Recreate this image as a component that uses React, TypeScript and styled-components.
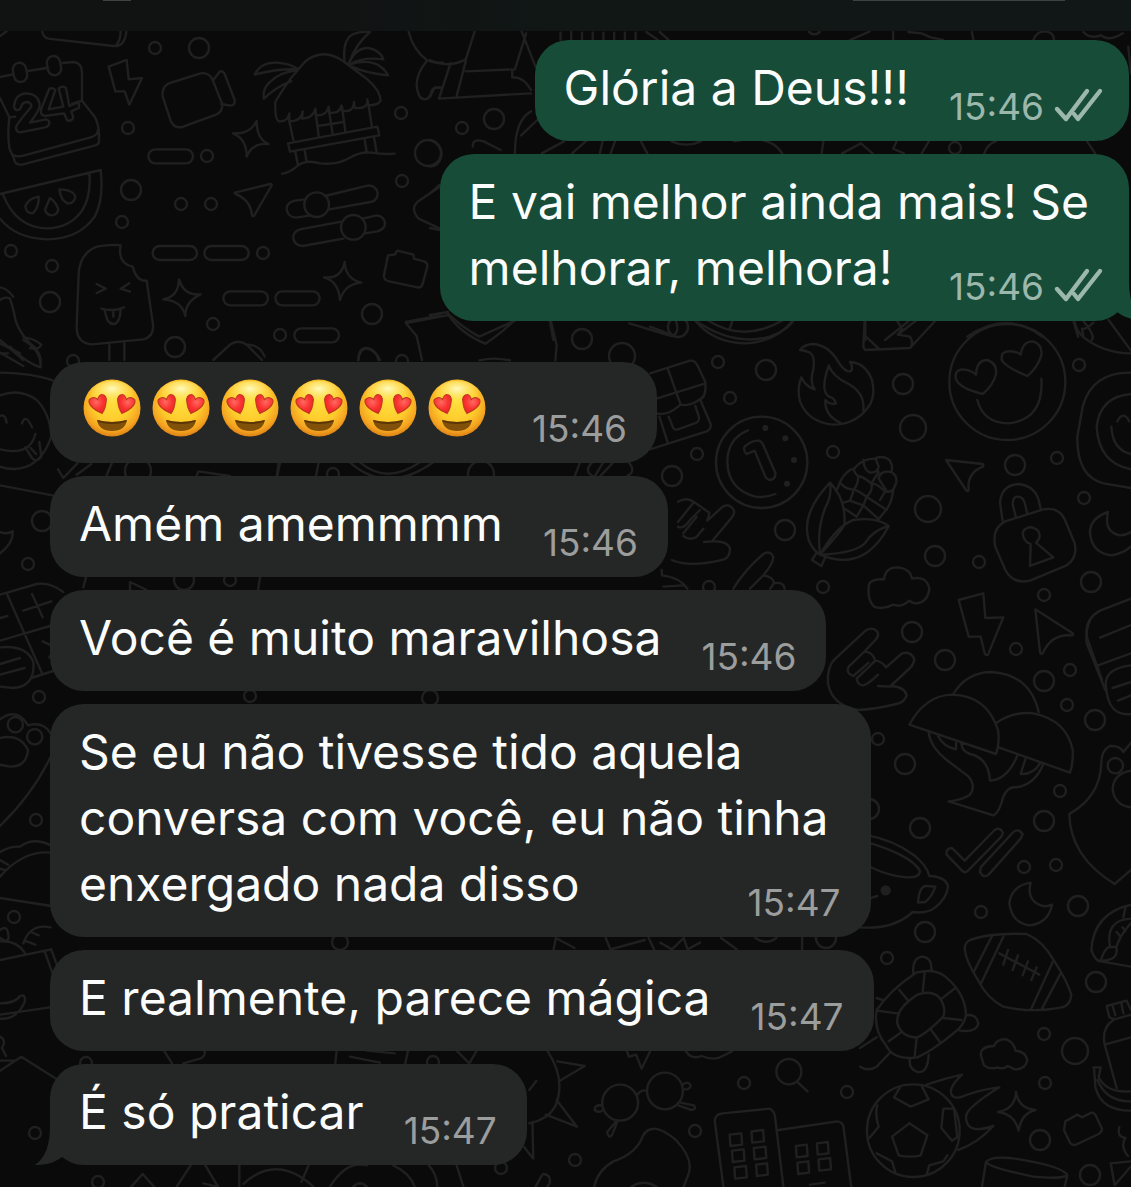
import React from "react";
import styled, { createGlobalStyle } from "styled-components";

const colors = {
  wallpaper: "#0a0a0a",
  doodle: "#202020",
  incoming: "#252726",
  outgoing: "#174c38",
  text: "#fbfcfc",
  incomingMeta: "#9c9d9d",
  outgoingMeta: "#9cb7ac",
};

const GlobalStyle = createGlobalStyle`
  *, *::before, *::after { box-sizing: border-box; }
  body {
    margin: 0;
    background: ${colors.wallpaper};
    font-family: Inter, "Liberation Sans", sans-serif;
  }
`;

const Screen = styled.main`
  position: relative;
  min-height: 100vh;
  overflow: hidden;
  background: ${colors.wallpaper};
`;

const WallpaperArt = styled.svg`
  position: absolute;
  top: 0;
  left: 0;
  width: 100%;
  height: 100%;
  fill: none;
  stroke: ${colors.doodle};
  stroke-width: 2.4;
  stroke-linecap: round;
  stroke-linejoin: round;

  path, circle, rect, ellipse {
    vector-effect: non-scaling-stroke;
  }
`;

const TopBar = styled.header`
  position: relative;
  display: flex;
  justify-content: space-between;
  height: 31px;
  padding: 0 66px 0 103px;
  background: linear-gradient(90deg, #111212 0%, #111313 30%, #101715 50%, #111716 100%);
`;

const TopBarEdge = styled.span<{ $width: number }>`
  width: ${({ $width }) => $width}px;
  height: 1px;
  background: #3c4241;
`;

const Conversation = styled.ol`
  position: relative;
  display: flex;
  flex-direction: column;
  gap: 13px;
  margin: 0;
  padding: 9px 2px 22px 50px;
  list-style: none;
`;

const Bubble = styled.li<{ $outgoing?: boolean; $first?: boolean }>`
  position: relative;
  display: flex;
  align-items: flex-end;
  align-self: ${({ $outgoing }) => ($outgoing ? "flex-end" : "flex-start")};
  gap: 40px;
  max-width: 100%;
  margin-top: ${({ $first }) => ($first ? "28px" : "0")};
  padding: ${({ $outgoing }) => ($outgoing ? "15px 28px 18px 29px" : "15px 30px 18px 29px")};
  border-radius: 34px;
  background: ${({ $outgoing }) => ($outgoing ? colors.outgoing : colors.incoming)};
  --meta: ${({ $outgoing }) => ($outgoing ? colors.outgoingMeta : colors.incomingMeta)};
`;

const LongBubble = styled(Bubble)`
  display: grid;
  grid-template-areas: "body";

  > p, > span {
    grid-area: body;
  }
  > span {
    justify-self: end;
  }
  > p {
    padding-right: 12px;
  }
`;

const Text = styled.p`
  margin: 0;
  padding-bottom: 2px;
  color: ${colors.text};
  font-size: 48px;
  line-height: 66px;
`;

const Emojis = styled.p`
  display: flex;
  align-items: center;
  gap: 5px;
  height: 68px;
  margin: 0;
  padding: 0 3px 6px 1px;
`;

const Meta = styled.span`
  display: flex;
  flex-shrink: 0;
  gap: 9px;
  color: var(--meta);
  font-size: 37px;
  line-height: 32px;
`;

const TicksIcon = styled.svg`
  width: 48px;
  height: 32px;
  overflow: visible;
  fill: none;
  stroke: currentColor;
  stroke-width: 4.4;
  stroke-linecap: round;
  stroke-linejoin: round;
`;

const Tail = styled.svg<{ $outgoing?: boolean }>`
  position: absolute;
  bottom: ${({ $outgoing }) => ($outgoing ? "1px" : "0")};
  ${({ $outgoing }) => ($outgoing ? "right: -16px; transform: scaleX(-1);" : "left: -16px;")}
  width: 40px;
  height: 48px;
  fill: ${({ $outgoing }) => ($outgoing ? colors.outgoing : colors.incoming)};
`;

function Wallpaper() {
  const dots: [number, number, number][] = [
    [155, 48, 6], [199, 48, 10], [128, 128, 6], [207, 156, 6], [131, 190, 10], [181, 204, 6], [211, 204, 6],
    [122, 222, 6], [11, 251, 6], [52, 266, 6], [50, 302, 10], [263, 253, 6], [213, 324, 6], [280, 335, 6],
    [175, 347, 10], [73, 361, 6], [372, 314, 10], [401, 113, 6], [428, 153, 13], [402, 181, 6], [402, 361, 6],
    [462, 128, 6], [494, 119, 10], [955, 148, 6], [582, 339, 10], [622, 356, 13], [678, 327, 10],
    [718, 362, 6], [766, 370, 10], [730, 398, 6], [903, 384, 10], [913, 428, 13], [833, 452, 6], [697, 454, 6],
    [672, 476, 10], [1079, 365, 6], [1015, 465, 10], [1057, 458, 6], [928, 509, 13], [785, 530, 10],
    [935, 556, 10], [979, 562, 6], [1084, 498, 6], [1091, 582, 10], [823, 587, 6], [709, 587, 6],
    [1044, 595, 6], [912, 632, 10], [945, 660, 10], [1016, 649, 6], [1070, 670, 6], [1044, 681, 10],
    [878, 739, 6], [905, 764, 10], [1067, 705, 6], [1095, 720, 10], [1060, 791, 6], [1044, 821, 10],
    [869, 809, 10], [920, 828, 10], [1024, 867, 6], [1056, 865, 6], [981, 912, 6], [1078, 906, 10],
    [925, 932, 10], [887, 958, 6], [826, 938, 10], [1096, 982, 10], [1044, 1034, 6], [1075, 1051, 13],
    [1045, 1083, 6], [1040, 1140, 10], [1090, 1175, 10], [744, 1083, 6], [847, 1092, 6], [695, 1131, 6],
    [575, 1160, 6], [138, 471, 13], [333, 474, 6], [42, 521, 10], [28, 564, 6], [184, 580, 10], [230, 580, 6],
    [39, 697, 6], [36, 820, 6], [14, 917, 6], [35, 1133, 6], [98, 1182, 6], [86, 1063, 6], [433, 1062, 6],
    [501, 1168, 6], [481, 474, 13], [102, 672, 6], [430, 698, 8], [250, 696, 6], [340, 942, 8],
  ];
  return (
    <WallpaperArt viewBox="0 0 1131 1187" preserveAspectRatio="xMinYMin slice" aria-hidden="true">
      {dots.map(([cx, cy, r]) => (
        <circle key={`${cx}-${cy}`} cx={cx} cy={cy} r={r} />
      ))}

      {/* Calendar, melon, ice lolly, hut */}
      <g transform="scale(.33333)">
        <path d="M126 90Q128 112 145 116L340 138Q374 142 379 95M362 92Q362 120 348 136M0 108L20 94M-4 232L38 223M84 213L140 204M188 189L220 186Q245 188 246 216V302L284 350Q296 372 297 402V424Q296 434 284 437L66 494Q44 496 42 476L28 445Q22 400 28 352L0 294M28 352L46 350M216 312L246 302M42 466Q52 472 70 467L272 412Q294 406 293 392" />
        <rect x="40" y="188" width="40" height="58" rx="20" transform="rotate(-10 60 217)" />
        <rect x="142" y="168" width="40" height="58" rx="20" transform="rotate(-10 162 197)" />
        <path d="M42 318Q46 282 78 280Q116 282 119 314Q120 330 90 368L138 358Q148 360 148 370Q146 380 136 382L60 397Q48 396 48 382Q48 374 94 320Q94 306 78 306Q66 308 64 320Q60 332 48 330Q42 326 42 318ZM148 266Q158 262 166 270L146 328L190 320L176 266Q186 256 198 264L208 318L232 308Q240 312 236 324L214 334L220 352Q216 364 202 362L192 340L134 348Q118 344 124 326Z" />
        <path d="M326 200L380 180L386 238L426 234L388 314L374 274L346 274Z" />
        <path d="M506 250L602 220Q628 216 638 240L666 310Q670 334 648 344L548 381Q522 386 512 362L488 290Q484 262 506 250ZM640 240L660 214Q670 212 674 222L704 300Q706 316 692 317L664 312" />
        <path d="M699 400Q750 404 770 363Q770 418 806 432Q756 428 740 470Q740 416 699 400ZM490 898Q536 890 537 838Q552 888 602 883Q556 904 556 948Q546 902 490 898ZM972 832Q1024 838 1034 786Q1036 836 1084 848Q1034 852 1020 900Q1016 844 972 832Z" />
        <rect x="445" y="448" width="134" height="42" rx="21" />
        <rect x="458" y="738" width="133" height="42" rx="21" />
        <rect x="613" y="738" width="133" height="42" rx="21" />
        <rect x="670" y="874" width="134" height="42" rx="21" />
        <rect x="826" y="874" width="133" height="42" rx="21" />
        <rect x="883" y="985" width="134" height="42" rx="21" />
        <path d="M0 582L302 510Q312 600 284 650Q236 718 140 718Q46 714 0 656M268 518Q274 590 246 632Q208 686 136 685Q48 680 10 586M76 618Q88 594 116 590Q118 622 98 640Q78 640 76 618ZM150 594Q168 606 175 628Q172 646 152 646Q134 640 136 626ZM178 568Q224 570 226 592Q220 612 202 610Q182 600 178 568Z" />
        <path d="M704 578L810 552Q818 552 814 558L762 648Q756 650 756 644Q750 598 706 582Z" />
        <path d="M764 224Q782 186 830 188Q870 190 894 208Q830 206 764 224ZM888 212Q840 216 810 246Q786 268 792 296Q830 258 874 244M826 306Q838 284 870 238L916 184Q970 142 1030 184L1102 238Q1140 270 1142 302Q1134 316 1106 316Q1102 300 1102 298Q1106 328 1064 324Q1062 308 1062 306Q1060 340 1026 332L1024 316Q1020 342 988 338L986 320Q980 348 948 346L946 326Q940 354 906 356L908 334Q904 364 868 364L868 340Q864 366 836 364Q824 356 826 306ZM1034 188Q1026 118 1060 102Q1080 94 1110 96Q1066 134 1050 184M1046 190Q1068 142 1106 144Q1142 152 1150 178Q1088 170 1052 192Q1110 176 1142 200Q1158 212 1164 226Q1100 220 1056 200" />
        <path d="M868 364L880 420M946 330L956 408M986 326L998 402M1026 320L1036 394M1106 318L1116 382M954 378L1030 366M864 430L1132 380L1138 406L870 455ZM886 456L894 496M914 450L920 486M1094 418L1100 456M1122 412L1130 456M846 521Q870 518 894 496Q920 478 960 490Q1010 496 1048 474Q1080 454 1116 458Q1150 464 1184 461" />
        <path d="M916 598L884 602Q858 608 860 630Q866 652 888 653L932 646M974 588L1106 556Q1130 558 1133 580Q1132 602 1112 606L988 628M1028 664L900 688Q878 694 880 716Q886 738 908 738L1030 716M1088 656L1130 646Q1152 648 1155 670Q1154 688 1132 694L1096 700" />
        <circle cx="950" cy="614" r="37" /><circle cx="1060" cy="682" r="37" />
        <path d="M1164 766L1184 764L1192 752L1240 764L1242 776L1272 784Q1284 788 1282 800L1268 852Q1264 864 1252 862L1168 844Q1150 840 1152 826Z" />
        <path d="M362 736Q338 732 290 740Q240 760 236 820L230 980Q230 1030 276 1033L430 1018Q462 1010 459 974L440 842Q410 846 398 800Q352 790 362 736ZM328 1034V1080M373 1030V1080M290 852L317 866L290 879M388 850L362 866L390 875M304 926Q340 936 372 922M314 932L320 954Q326 972 342 972Q360 968 362 928M340 934V950" />
        <path d="M0 862Q20 864 40 890M0 900Q16 888 30 896Q44 940 46 960Q60 1000 90 1030Q118 1050 122 1080M0 1020L70 1080M70 1012Q100 1014 124 1034Q116 1050 90 1044M0 1060H24" />
        <path d="M1226 96Q1240 150 1280 180Q1300 190 1330 188M1278 186Q1250 220 1250 256Q1254 298 1274 298Q1290 298 1296 270Q1306 258 1320 264M1320 560L1260 600Q1226 622 1256 656L1320 686M640 1080L690 1034Q714 1016 740 1034L786 1080M742 1034Q780 1034 794 1070M1218 966L1320 946M1218 970L1250 1008L1266 1080M1076 1080Q1074 1044 1100 1044Q1124 1046 1140 1080" />
      </g>

      {/* Deck chair and the pieces round the first replies */}
      <g transform="translate(430 0) scale(.447 .33333)">
        <path d="M0 180Q40 206 80 178L100 94M80 214L190 208L215 100M205 94L236 200M0 290L10 264L24 262M46 190L20 296L226 280M80 184L60 286M184 210V232Q210 230 226 270M292 98V120M316 96V120M340 98V120M364 98V120M388 98V120M412 98V120M436 98V120M460 98V120M484 96L510 120M514 96L534 120M848 96Q860 110 872 96M984 94L940 120M1070 96L1100 100L1120 112L1148 120M1036 94V120M1212 96L1216 120M1350 120Q1356 94 1376 94Q1396 96 1396 120M1462 96Q1476 118 1500 106Q1520 126 1550 100M190 460Q190 360 226 334M204 406L240 360M250 460L300 424M318 460L350 422M380 460L386 424M404 460L414 424M96 440Q94 414 120 424L158 450M472 424L486 460M540 424Q574 444 606 424M680 424Q760 400 788 460M880 424L876 460M922 460L964 430L990 460M1044 424L1036 446L1060 460M1116 424L1100 460M1240 460Q1248 430 1266 424M1470 424L1488 460M1562 140L1568 220M0 420Q26 430 26 466Q20 500 0 500M0 580L22 554M0 684L22 690M0 945L40 936M40 940Q70 980 110 1010L190 962M268 962L276 1020M446 970L540 1008Q560 1000 550 962M596 964Q680 1040 760 1010Q800 990 812 964M974 964V1020M1070 964L1018 1020M1202 1010Q1290 930 1370 1010M1440 966L1450 1010M1462 964Q1490 1010 1480 1020" />
      </g>

      {/* Gift, coin, corn, fire, padlock */}
      <g transform="translate(650 320) scale(.33333)">
        <path d="M0 20L64 44M134 0Q190 70 290 70Q380 64 430 0M172 0Q280 70 400 0M240 24L248 0M644 0L640 82L646 90L780 84L858 0M646 48L686 86M740 0L756 26L744 44L780 50Q790 66 784 78M744 44L800 0" />
        <path d="M0 160L120 122Q134 120 142 136L166 186Q170 230 150 238L182 312Q184 328 170 334L0 388M54 148L92 254M0 242L166 190M20 280Q50 290 92 254Q120 260 150 238M28 290L54 370M56 290L68 320Q72 332 84 328L140 308Q150 300 146 288L136 258" />
        <circle cx="335" cy="427" r="137" />
        <path d="M294 331Q232 356 232 426Q234 508 316 530Q346 534 376 522M290 402Q278 392 284 380Q306 360 328 362Q336 366 340 376L376 458Q378 478 360 480Q350 478 346 470L314 392Z" />
        <g fill="#202020" stroke="none"><circle cx="346" cy="324" r="9" /><circle cx="406" cy="355" r="9" /><circle cx="432" cy="420" r="9" /><circle cx="411" cy="491" r="9" /></g>
        <path d="M450 90Q464 72 490 72Q536 76 564 124Q588 162 604 152Q610 140 600 126Q646 128 666 180Q676 220 662 250Q624 314 548 314Q474 306 450 244Q440 206 454 172Q466 200 494 208Q478 184 490 148Q496 108 480 98Q464 90 450 90ZM536 136Q548 170 596 192Q646 220 640 272M536 138Q510 210 536 230Q552 232 558 250Q540 256 526 240Q524 286 570 308" />
        <circle cx="1072" cy="186" r="174" />
        <path d="M998 222Q930 206 918 178Q912 150 938 148Q964 150 978 164Q980 120 1012 120Q1042 130 1038 162Q1030 196 998 222ZM1132 168Q1072 144 1056 122Q1050 96 1074 94Q1098 92 1112 104Q1118 64 1148 64Q1178 72 1174 106Q1162 144 1132 168ZM982 240Q1000 310 1076 310Q1182 298 1174 176M1272 0Q1282 40 1300 50L1296 26Q1308 30 1330 8M1298 50Q1360 100 1443 100M1376 0L1443 92" />
        <path d="M888 420L998 432Q1002 436 998 440Q950 460 956 510Q952 516 948 510Z" />
        <path d="M540 488Q452 580 476 660Q488 690 510 704Q574 634 583 616Q590 540 540 488ZM540 490Q546 530 526 562Q500 630 510 700M510 704Q560 618 610 600Q680 590 716 618Q690 670 650 698Q590 738 510 704ZM514 704Q620 698 646 668Q670 630 716 618M500 698L486 720L514 738L526 712" />
        <path d="M560 512Q568 490 572 482Q590 450 612 446Q636 416 674 416Q700 404 720 422Q730 440 724 456Q744 468 738 490Q730 504 728 520Q724 550 708 570L684 600M572 490Q590 510 612 508Q626 490 624 468Q612 458 612 446M624 468Q640 470 664 490Q670 510 650 530Q620 510 612 508M664 490Q680 490 700 510Q716 520 728 510M650 530L640 556Q620 550 600 542L580 548M640 556L620 590L584 566M650 530L710 570M640 556L684 596M640 420Q642 450 660 458Q684 458 686 440L678 418M686 456L664 490M724 456Q690 450 686 476L708 510L690 540M600 542L612 508" />
        <path d="M84 545Q110 530 132 546L178 578Q176 590 172 602L218 560Q240 548 252 572Q254 582 246 592L186 664Q230 662 240 684Q240 712 222 718Q120 744 66 720M84 620Q100 630 120 600L150 570M132 546L84 606M100 648Q120 664 140 650L160 626M140 590L100 640M162 666L186 664M35 750L36 766Q90 772 112 806M40 800L100 796M250 806Q284 750 340 702Q360 690 370 710Q370 730 340 766L300 806M340 766Q370 770 372 790L360 806M372 790Q400 784 404 806" />
        <path d="M656 800Q656 776 702 778Q706 742 742 742Q782 746 786 776Q830 766 838 806Q834 846 800 850Q786 850 778 842Q754 864 730 854Q700 870 672 860Q652 840 656 800Z" />
        <path d="M1058 604L1050 548Q1054 496 1106 492Q1154 498 1166 540L1172 566M1098 594L1088 552Q1088 528 1106 530Q1122 532 1126 556L1132 582M1066 604L1180 568Q1226 560 1244 598L1274 670Q1284 712 1250 736L1140 782Q1090 794 1066 750L1036 680Q1024 624 1066 604ZM1132 668Q1112 648 1122 630Q1142 612 1164 632Q1176 652 1158 668L1210 712L1140 738L1142 672Z" />
        <path d="M1374 576Q1318 596 1320 640Q1326 700 1386 706Q1420 700 1442 680M1374 576Q1360 636 1410 646Q1426 646 1443 636" />
        <path d="M926 840L1000 820L1006 894L1060 892L1014 1004Q1008 1008 1004 1000L992 950H956ZM1156 868L1268 940Q1272 946 1262 946Q1204 942 1178 1000Q1170 1004 1170 996Z" />
        <path d="M1443 158Q1326 156 1298 260L1282 350Q1280 470 1360 490L1443 504M1443 222Q1350 230 1340 320Q1346 430 1443 448M1384 320Q1388 390 1443 402M1402 304Q1420 270 1438 304M1443 836L1350 872Q1300 900 1312 956L1356 1080M1350 953L1443 915M1344 1036L1443 1000" />
      </g>

      {/* Rock hand, mushrooms, cup, ticks, moon, paw */}
      <g transform="translate(800 620) scale(.33333)">
        <path d="M272 198Q314 200 320 226Q314 246 290 252Q220 268 176 270Q96 258 84 190Q80 136 110 112L194 34Q218 16 234 38Q236 50 226 60L192 96Q216 92 226 122Q246 124 258 142L306 100Q332 92 343 118Q342 132 330 144L272 198M192 96L146 140Q136 160 160 168L206 128M170 174Q172 196 190 196Q206 192 234 164M170 176L226 122M234 198L272 200" />
        <path d="M328 314Q376 226 456 224Q560 226 594 330Q600 370 588 402ZM460 222Q500 156 576 156Q690 164 716 276M590 308Q640 274 700 280Q800 300 818 390Q820 430 810 458L596 382M386 336Q390 380 440 420L506 470Q530 500 508 526Q480 542 446 544L580 586Q594 580 604 550Q616 500 646 502Q704 496 730 432M414 348Q430 380 468 388V366M484 370Q486 394 510 402Q566 414 570 482Q624 478 652 406M676 418L662 462Q700 464 720 430" />
        <path d="M204 646Q280 660 340 704Q382 738 388 768Q438 770 444 800Q440 836 406 862Q380 882 338 876Q280 930 180 922M204 668Q250 680 300 704Q350 730 360 754Q358 774 320 772Q270 770 204 738M354 848Q358 796 380 798L406 800Q396 830 376 846ZM206 836L232 828" />
        <circle cx="257" cy="811" r="12" fill="#202020" />
        <path d="M456 684L494 722L584 630Q600 620 609 638L604 650L502 754Q494 760 486 752L440 704Q436 686 456 684ZM542 742L640 636Q656 624 668 642L662 656L566 764Q550 776 540 756Z" />
        <path d="M692 788Q634 798 628 850Q636 910 690 916Q746 908 756 854Q730 866 704 846Q682 826 692 788Z" />
        <path d="M870 0Q856 30 860 70L916 210M993 136Q910 146 918 200Q924 290 993 282M938 204L993 186M954 242L993 226M993 368L970 396Q960 376 930 378Q904 390 904 430Q900 530 808 582Q810 710 944 792L993 750M993 452Q940 460 938 508Q944 556 993 562" />
        <circle cx="946" cy="437" r="23" />
      </g>

      {/* Turtle, rugby ball, football, bottle */}
      <g transform="translate(860 900) scale(.33333)">
        <path d="M168 218Q224 204 256 230Q316 280 318 344Q314 376 280 400Q220 450 172 472Q100 482 78 436Q40 390 50 330Q90 270 168 218ZM172 284Q210 270 236 290Q260 320 250 350Q200 400 172 412Q124 412 112 370Q106 326 172 284ZM160 220Q156 170 190 170Q218 176 214 214M318 346Q350 340 355 372Q348 398 300 392M206 464Q204 520 172 516Q144 504 150 476M80 440L92 456L50 500Q24 516 0 500M50 412L0 444M50 294L68 300M118 270L146 304M194 218L188 276M286 264L242 298M304 360L250 354M240 426L212 388M164 470L170 412M86 424L122 398M50 332L112 340" />
        <path d="M330 120Q390 98 500 102Q550 124 582 182Q622 244 634 284Q632 316 606 322Q520 340 430 320Q380 294 354 240Q316 180 314 144Q316 126 330 120ZM396 108L342 214M430 110L362 252M578 186L512 330M602 220L546 326M418 160L538 224M444 150L430 194M474 166L458 210M504 184L488 226M530 202L514 240" />
        <path d="M362 464Q364 438 402 438Q410 416 440 418Q464 430 466 452Q498 454 502 482Q494 510 464 508L444 498Q426 510 412 502Q390 510 372 496Z" />
        <circle cx="160" cy="692" r="139" />
        <path d="M148 670L202 706L182 766Q150 774 116 766L96 710ZM120 562L102 592L152 620L206 598L186 560M250 626H282L292 712L276 722L244 684ZM52 616Q44 640 56 680L28 714M50 760L96 784L106 816M262 766L250 784L208 796L200 824M200 554Q260 534 306 524Q266 562 274 582Q280 596 300 592Q360 568 418 562Q318 624 318 650Q318 706 400 678Q350 732 294 750" />
        <path d="M468 576Q474 624 526 630Q484 640 476 692Q464 642 414 636Q466 626 468 576ZM616 664L652 644L666 652L694 638Q704 638 708 648L726 686Q726 696 716 702L648 734Q636 738 630 728L612 690Z" />
        <path d="M378 786Q398 762 500 782Q610 802 622 826Q600 838 520 830Q386 802 378 786L366 860M622 826L614 860M752 790L812 784M752 790L764 856L812 800M778 682Q770 710 796 714Q780 740 804 768" />
        <path d="M813 14Q700 40 694 150Q706 184 722 184L813 200M722 184Q730 150 750 138Q736 60 813 56M768 146Q776 110 812 70M724 182Q780 180 768 140L748 142M790 52L796 24M770 96L782 110M788 82L796 94" />
        <path d="M740 318L800 302L813 330M740 318L748 352L764 358L813 344M758 318L766 346M784 310L790 340M760 360Q724 384 734 434L770 564M734 434L813 412M700 502H722L716 532Q740 580 813 574M702 502L706 560Q722 632 813 632M712 540Q740 606 813 604" />
      </g>

      {/* Sunglasses, buildings, sun, magnifier */}
      <g transform="translate(520 920) scale(.38966 .33333)">
        <ellipse cx="257" cy="548" rx="46" ry="54" /><ellipse cx="372" cy="513" rx="46" ry="55" /><ellipse cx="690" cy="455" rx="32" ry="38" />
        <path d="M302 524Q310 508 326 512M210 556Q190 554 192 570Q202 580 210 572M248 602L224 636Q226 656 236 646L250 604M416 496Q430 480 438 496Q436 510 422 508M412 548L446 556Q454 568 440 570L406 556M712 486L738 514" />
        <path d="M190 800Q200 750 240 724Q300 700 316 646Q340 600 400 660Q450 720 430 770L420 800M286 800Q316 776 350 800M522 800L500 604Q500 582 520 580L640 566Q650 570 654 586L676 800M664 630L814 604Q828 606 830 620L850 800" />
        <path d="M538 644L568 640L570 674L540 678ZM594 634L624 630L626 664L596 668ZM544 692L574 688L576 722L546 726ZM600 684L630 680L632 714L602 718ZM550 742L580 738L582 772L552 776ZM606 734L634 730L636 764L608 768ZM708 678L736 674L738 708L710 712ZM762 670L790 666L792 700L764 704ZM712 728L740 724L742 758L714 762ZM766 718L796 714L798 748L768 752ZM744 794L782 788" />
        <path d="M70 392Q120 480 90 560Q70 600 24 610M96 424L166 438L100 484M94 540L146 620L66 584M32 606L34 716L10 680M24 510L42 482M274 394L280 410L298 404L312 446L334 394M426 394Q440 420 466 408Q500 424 520 408L544 394M60 762Q80 764 76 790L70 800M40 800L56 766M86 90L92 54L140 84M220 54L232 88L320 60M330 54L344 88M360 68L390 88L420 54L430 88L462 68M516 54L556 88M604 54Q632 76 658 54M724 54V88" />
      </g>

      {/* Left edge: tongue-out face, calculator, paw, cake */}
      <g transform="translate(0 340) scale(.33333)">
        <path d="M0 38L70 78M0 10L60 40M70 0Q124 30 122 82Q80 70 30 20M0 98Q100 100 160 122M0 166Q60 144 110 180Q150 220 154 290Q130 360 80 380Q40 394 0 380M0 228Q16 220 20 248M66 250Q76 218 96 262M0 328Q90 350 106 282M76 322L96 354Q110 370 124 350L118 306M92 324L108 342M174 388L190 414L232 370M274 372L230 404M0 436L158 466M336 368L320 406M590 406L596 394L690 408M840 368L832 408M0 576Q20 584 38 574Q40 610 0 640M258 712L250 742M390 750V726L440 750M780 712L774 750" />
      </g>
      <g transform="translate(0 560) scale(.33333)">
        <path d="M0 104L110 72Q150 66 190 96M22 104L126 340M0 242L150 198M70 152L154 124M96 102L128 172M94 354L206 318M128 244L166 262L148 292M0 174L22 168M0 262Q80 254 100 306Q106 380 40 384L0 380M0 312L60 294M0 344L74 324M0 478Q50 440 84 496Q130 484 152 520M0 798Q100 700 152 590M0 534Q60 520 84 570Q80 620 30 620L0 614M0 876Q30 858 60 860Q100 830 152 856M0 950Q70 870 154 878M0 900L24 914M0 926L14 930M0 1014L154 1038M0 1110Q24 1090 26 1134Q20 1150 0 1134M74 1178Q50 1140 0 1144M70 1150Q90 1090 152 1102M92 1116L116 1126M74 1142L106 1154M0 1200L154 1168M134 1174L174 1286M154 1170L194 1276M0 1330Q46 1330 60 1308Q78 1300 74 1326Q50 1380 0 1376M0 1364L150 1342M0 1430Q20 1440 6 1464L18 1488M0 1532L64 1490L180 1564M0 1502H46M248 942L262 972M340 942L352 972M340 1230V1256M350 1230L370 1256" />
        <circle cx="46" cy="494" r="23" /><circle cx="104" cy="530" r="23" />
      </g>
      <g transform="translate(200 315) scale(.33333)">
        <path d="M618 24L746 0Q780 54 856 86Q910 50 942 16M1052 16L1070 90L1066 136M474 136Q480 100 500 100Q530 108 536 136M838 136Q880 126 930 136M236 442L230 484M356 442L348 484M450 442Q560 540 700 442M480 442Q560 510 660 442M1140 442L1124 484M1176 442Q1150 470 1180 484M1210 442L1184 484M1240 442L1200 484M1286 442Q1310 470 1280 484" />
      </g>
      <g transform="translate(0 1030) scale(.33333)">
        <path d="M492 62L516 100M550 100L600 86Q616 80 614 62M1010 62L1006 100M1050 80L1140 98M1100 62L1184 70M1224 62L1216 100M1370 62L1408 100L1430 62M394 470L428 432L462 470M530 470L572 406M616 406L654 470M718 406V470M730 462Q830 370 940 470M926 406L904 456M990 470Q1040 390 1100 406M1180 406Q1230 430 1244 470M1286 406Q1310 430 1312 470M1370 406L1390 470M1060 470Q1080 450 1100 470M610 460L650 470" />
      </g>
    </WallpaperArt>
  );
}

function HeartEyes() {
  const heart = "M0 10C-4 6-9 2-9-4C-9-7-7-8-5-8C-2-8 0-6 0-4C1-7 4-9 6-8C9-7 9-3 8-1C6 4 3 8 0 10Z";
  return (
    <svg width="64" height="62" viewBox="0 0 64 62" aria-hidden="true">
      <defs>
        <radialGradient id="face" cx="50%" cy="40%" r="62%">
          <stop offset="0" stopColor="#ffdf3c" />
          <stop offset=".55" stopColor="#fdcb2c" />
          <stop offset=".82" stopColor="#f5a420" />
          <stop offset="1" stopColor="#d67a14" />
        </radialGradient>
        <radialGradient id="shine" cx="50%" cy="30%" r="60%">
          <stop offset="0" stopColor="#fffcc8" stopOpacity=".95" />
          <stop offset="1" stopColor="#ffe64a" stopOpacity="0" />
        </radialGradient>
        <radialGradient id="heart" cx="40%" cy="30%" r="75%">
          <stop offset="0" stopColor="#ff6a62" />
          <stop offset=".5" stopColor="#fb3432" />
          <stop offset="1" stopColor="#e01f27" />
        </radialGradient>
      </defs>
      <circle cx="32" cy="31" r="28.5" fill="url(#face)" />
      <ellipse cx="32" cy="17" rx="22" ry="13" fill="url(#shine)" />
      <path d="M17 43Q32 47 47 43Q45 54 32 54Q19 54 17 43Z" fill="#815009" />
      <path d="M17 43Q32 47 47 43L46 45Q32 49 18 45Z" fill="#5b3508" />
      <g fill="url(#heart)" stroke="#b93a1d" strokeWidth="1">
        <path d={heart} transform="translate(19 27) rotate(-18)" />
        <path d={heart} transform="translate(45 27) scale(-1 1) rotate(-18)" />
      </g>
    </svg>
  );
}

function Ticks() {
  return (
    <TicksIcon viewBox="0 0 48 32" role="img" aria-label="Entregue">
      <path d="M4 18L13 28L34 0M21 23L25 28L47 0" />
    </TicksIcon>
  );
}

function BubbleTail({ outgoing }: { outgoing?: boolean }) {
  return (
    <Tail $outgoing={outgoing} viewBox="0 0 40 48" aria-hidden="true">
      <path d="M16 8C16 28 12 40 1 48C12 48 20 46 28 40L40 44V8Z" />
    </Tail>
  );
}

type Message = {
  lines?: string[];
  emojis?: number;
  time: string;
  outgoing?: boolean;
  first?: boolean;
  tail?: boolean;
};

const messages: Message[] = [
  { lines: ["Glória a Deus!!!"], time: "15:46", outgoing: true },
  { lines: ["E vai melhor ainda mais! Se", "melhorar, melhora!"], time: "15:46", outgoing: true, tail: true },
  { emojis: 6, time: "15:46", first: true },
  { lines: ["Amém amemmmm"], time: "15:46" },
  { lines: ["Você é muito maravilhosa"], time: "15:46" },
  { lines: ["Se eu não tivesse tido aquela", "conversa com você, eu não tinha", "enxergado nada disso"], time: "15:47" },
  { lines: ["E realmente, parece mágica"], time: "15:47" },
  { lines: ["É só praticar"], time: "15:47", tail: true },
];

function MessageBubble({ lines = [], emojis, time, outgoing, first, tail }: Message) {
  const Shell = lines.length > 1 ? LongBubble : Bubble;
  return (
    <Shell $outgoing={outgoing} $first={first}>
      {tail && <BubbleTail outgoing={outgoing} />}
      {emojis ? (
        <Emojis role="img" aria-label="Olhos de coração">
          {Array.from({ length: emojis }, (_, i) => (
            <HeartEyes key={i} />
          ))}
        </Emojis>
      ) : (
        <Text>
          {lines.map((line, i) => (
            <React.Fragment key={line}>
              {i > 0 && <br />}
              {line}
            </React.Fragment>
          ))}
        </Text>
      )}
      <Meta>
        <time>{time}</time>
        {outgoing && <Ticks />}
      </Meta>
    </Shell>
  );
}

export default function App() {
  return (
    <>
      <GlobalStyle />
      <Screen>
        <Wallpaper />
        <TopBar>
          <TopBarEdge $width={28} />
          <TopBarEdge $width={212} />
        </TopBar>
        <Conversation>
          {messages.map((message, i) => (
            <MessageBubble key={i} {...message} />
          ))}
        </Conversation>
      </Screen>
    </>
  );
}
